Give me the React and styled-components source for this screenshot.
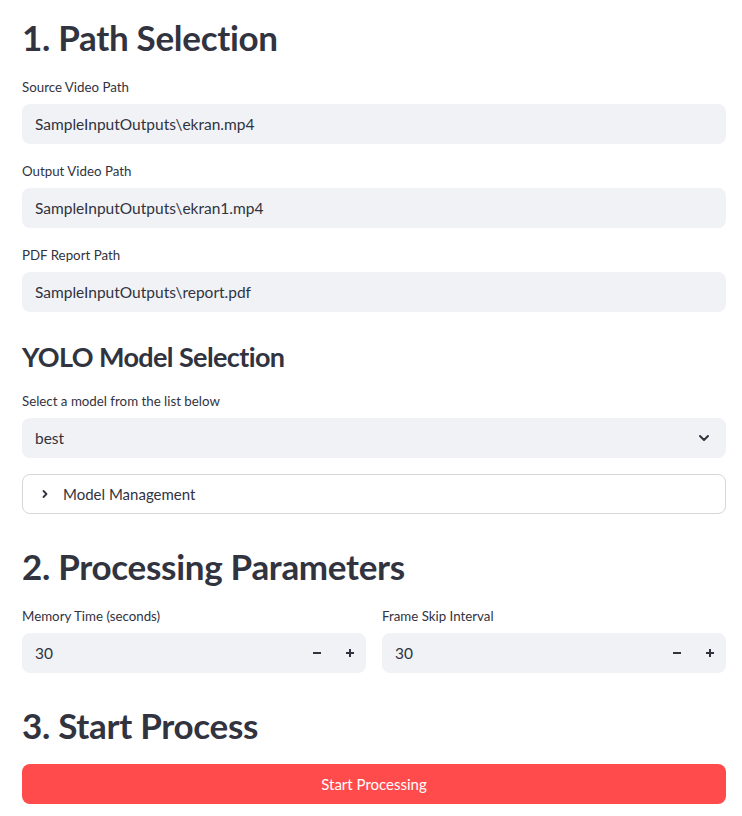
import React from "react";
import styled, { createGlobalStyle } from "styled-components";

const Global = createGlobalStyle`
  html, body { margin: 0; padding: 0; background: #ffffff; }
  body { font-family: Lato, "Noto Sans", sans-serif; color: #31333f; -webkit-font-smoothing: antialiased; }
  * { box-sizing: border-box; }
`;

const Page = styled.div`
  width: 742px;
  padding: 15px 16px 0 22px;
  display: flex;
  flex-direction: column;
`;

const Header = styled.h2`
  margin: ${(p) => (p.$first ? "0" : "30px")} 0 17px 0;
  font-size: 35px;
  line-height: 44px;
  font-weight: 700;
  color: #31333f;
  letter-spacing: -0.3px;
`;

const SubHeader = styled.h3`
  margin: 27px 0 15px 0;
  font-size: 27px;
  line-height: 36px;
  font-weight: 700;
  color: #31333f;
  letter-spacing: -0.6px;
`;

const Stack = styled.div`
  display: flex;
  flex-direction: column;
  gap: 16px;
`;

const Field = styled.div`
  display: flex;
  flex-direction: column;
`;

const Label = styled.label`
  font-size: 13.3px;
  line-height: 22px;
  margin-bottom: 6px;
  color: #31333f;
`;

const InputBox = styled.div`
  height: 40px;
  background: #f0f2f6;
  border-radius: 8px;
  display: flex;
  align-items: center;
  padding: 0 ${(p) => (p.$stepper ? "0" : "12px")} 0 13px;
  font-size: 15.5px;
  color: #31333f;
`;

const Value = styled.span`
  flex: 1;
`;

const Chevron = styled.svg`
  width: 16px;
  height: 16px;
  margin-right: 2px;
`;

const Expander = styled.div`
  height: 40px;
  border: 1px solid #d6d6d9;
  border-radius: 8px;
  display: flex;
  align-items: center;
  padding-left: 15px;
  gap: 11px;
  font-size: 15px;
  color: #31333f;
`;

const Columns = styled.div`
  display: grid;
  grid-template-columns: 1fr 1fr;
  gap: 16px;
`;

const StepBtn = styled.span`
  width: 33px;
  display: flex;
  justify-content: center;
  align-items: center;
`;

const Button = styled.button`
  height: 40px;
  width: 100%;
  border: none;
  border-radius: 8px;
  background: #ff4b4b;
  color: #ffffff;
  font-family: inherit;
  font-size: 15px;
  cursor: pointer;
`;

const ChevronDown = () => (
  <Chevron viewBox="0 0 16 16">
    <path d="M4 6l4 4 4-4" fill="none" stroke="#31333f" strokeWidth="2" strokeLinecap="round" strokeLinejoin="round" />
  </Chevron>
);

const ChevronRight = () => (
  <svg width="14" height="14" viewBox="0 0 14 14">
    <path d="M5.5 4l3 3-3 3" fill="none" stroke="#31333f" strokeWidth="1.8" strokeLinecap="round" strokeLinejoin="round" />
  </svg>
);

const Minus = () => (
  <svg width="12" height="12" viewBox="0 0 12 12">
    <path d="M2 6h8" stroke="#31333f" strokeWidth="2" />
  </svg>
);

const Plus = () => (
  <svg width="12" height="12" viewBox="0 0 12 12">
    <path d="M2 6h8M6 2v8" stroke="#31333f" strokeWidth="2" />
  </svg>
);

const TextField = ({ label, value }) => (
  <Field>
    <Label>{label}</Label>
    <InputBox>
      <Value>{value}</Value>
    </InputBox>
  </Field>
);

const NumberField = ({ label, value }) => (
  <Field>
    <Label>{label}</Label>
    <InputBox $stepper>
      <Value>{value}</Value>
      <StepBtn><Minus /></StepBtn>
      <StepBtn><Plus /></StepBtn>
    </InputBox>
  </Field>
);

export default function App() {
  return (
    <>
      <Global />
      <Page>
        <Header $first>1. Path Selection</Header>
        <Stack>
          <TextField label="Source Video Path" value="SampleInputOutputs\ekran.mp4" />
          <TextField label="Output Video Path" value="SampleInputOutputs\ekran1.mp4" />
          <TextField label="PDF Report Path" value="SampleInputOutputs\report.pdf" />
        </Stack>

        <SubHeader>YOLO Model Selection</SubHeader>
        <Stack>
          <Field>
            <Label>Select a model from the list below</Label>
            <InputBox>
              <Value>best</Value>
              <ChevronDown />
            </InputBox>
          </Field>
          <Expander>
            <ChevronRight />
            <span>Model Management</span>
          </Expander>
        </Stack>

        <Header>2. Processing Parameters</Header>
        <Columns>
          <NumberField label="Memory Time (seconds)" value="30" />
          <NumberField label="Frame Skip Interval" value="30" />
        </Columns>

        <Header>3. Start Process</Header>
        <Button>Start Processing</Button>
      </Page>
    </>
  );
}
